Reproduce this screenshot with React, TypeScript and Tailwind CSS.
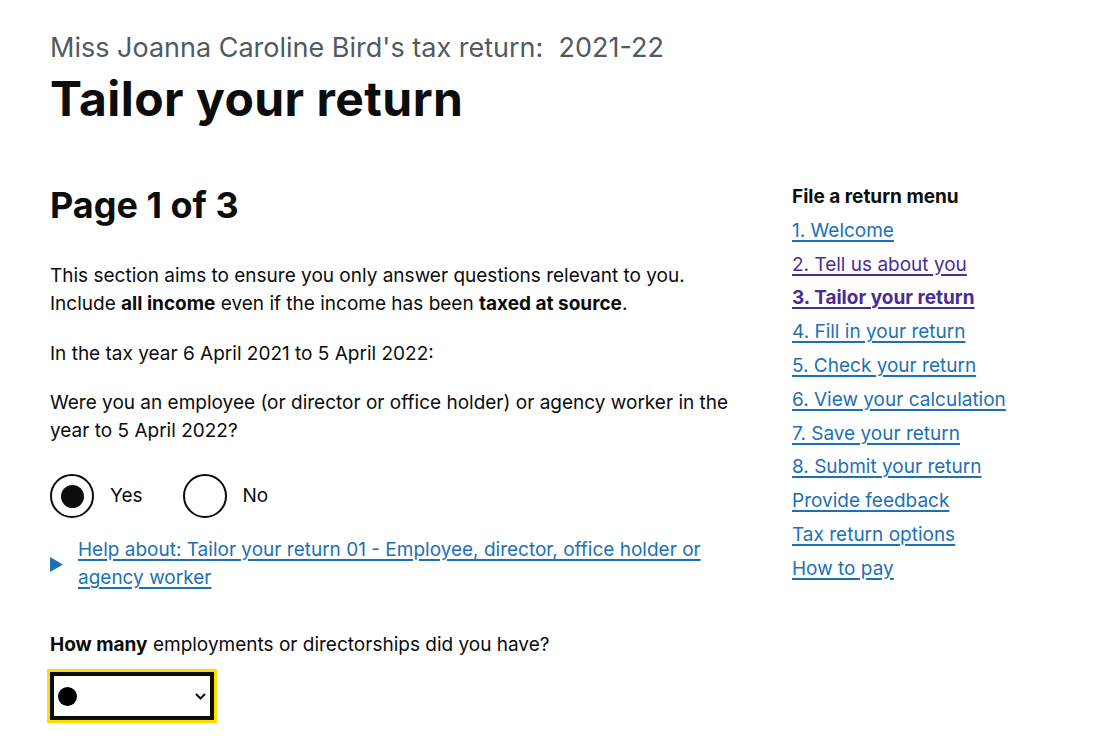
import React from "react";

const link = "underline decoration-2 underline-offset-[3px]";

const menu: { label: string; cls: string }[] = [
  { label: "1. Welcome", cls: "text-[#1d70b8]" },
  { label: "2. Tell us about you", cls: "text-[#4c2c92]" },
  { label: "3. Tailor your return", cls: "text-[#4c2c92] font-bold" },
  { label: "4. Fill in your return", cls: "text-[#1d70b8]" },
  { label: "5. Check your return", cls: "text-[#1d70b8]" },
  { label: "6. View your calculation", cls: "text-[#1d70b8]" },
  { label: "7. Save your return", cls: "text-[#1d70b8]" },
  { label: "8. Submit your return", cls: "text-[#1d70b8]" },
  { label: "Provide feedback", cls: "text-[#1d70b8]" },
  { label: "Tax return options", cls: "text-[#1d70b8]" },
  { label: "How to pay", cls: "text-[#1d70b8]" },
];

function Radio({ checked, label }: { checked: boolean; label: string }) {
  return (
    <div className="flex items-center gap-[16px]">
      <div className="w-[44px] h-[44px] rounded-full border-2 border-[#0b0c0c] flex items-center justify-center">
        {checked && <div className="w-[23px] h-[23px] rounded-full bg-[#0b0c0c]" />}
      </div>
      <span>{label}</span>
    </div>
  );
}

export default function App() {
  return (
    <div
      className="min-h-[736px] bg-white text-[#0b0c0c] px-[50px] pt-[33px]"
      style={{ fontFamily: "Inter, 'Liberation Sans', sans-serif" }}
    >
      <div className="text-[27px] leading-[30px] text-[#505a5f] whitespace-pre">
        Miss Joanna Caroline Bird's tax return:  2021-22
      </div>
      <h1 className="mt-[11px] text-[48px] leading-[50px] font-bold tracking-[0.45px]">
        Tailor your return
      </h1>

      <div className="flex mt-[56px]">
        <div className="w-[695px] pt-[5px] text-[19px] leading-[28px]">
          <h2 className="text-[36px] leading-[40px] font-bold">Page 1 of 3</h2>

          <p className="mt-[37px]">
            This section aims to ensure you only answer questions relevant to you.
            <br />
            Include <b>all income</b> even if the income has been <b>taxed at source</b>.
          </p>

          <p className="mt-[22px]">In the tax year 6 April 2021 to 5 April 2022:</p>

          <p className="mt-[21px]">
            Were you an employee (or director or office holder) or agency worker in the year to 5 April 2022?
          </p>

          <div className="mt-[29px] flex items-center gap-[40px]">
            <Radio checked label="Yes" />
            <Radio checked={false} label="No" />
          </div>

          <div className="mt-[18px] flex items-center">
            <svg width="13" height="15" viewBox="0 0 13 15" className="shrink-0">
              <polygon points="0,0 13,7.5 0,15" fill="#1d70b8" />
            </svg>
            <span className={`ml-[15px] text-[#1d70b8] ${link}`}>
              Help about: Tailor your return 01 - Employee, director, office holder or agency worker
            </span>
          </div>

          <p className="mt-[39px]">
            <b>How many</b> employments or directorships did you have?
          </p>

          <div className="mt-[13px] w-[164px] h-[48px] border-4 border-[#0b0c0c] outline-[3px] outline-solid outline-[#ffdd00] bg-white flex items-center justify-between pl-[4px] pr-[4px]">
            <div className="w-[19px] h-[19px] rounded-full bg-black" />
            <svg width="11" height="7" viewBox="0 0 11 7">
              <polyline points="1,1 5.5,5.5 10,1" fill="none" stroke="#0b0c0c" strokeWidth="2" />
            </svg>
          </div>
        </div>

        <div className="ml-[47px] text-[19px] leading-[33.8px]">
          <div className="font-bold">File a return menu</div>
          {menu.map((m) => (
            <div key={m.label}>
              <span className={`${m.cls} ${link}`}>{m.label}</span>
            </div>
          ))}
        </div>
      </div>
    </div>
  );
}
